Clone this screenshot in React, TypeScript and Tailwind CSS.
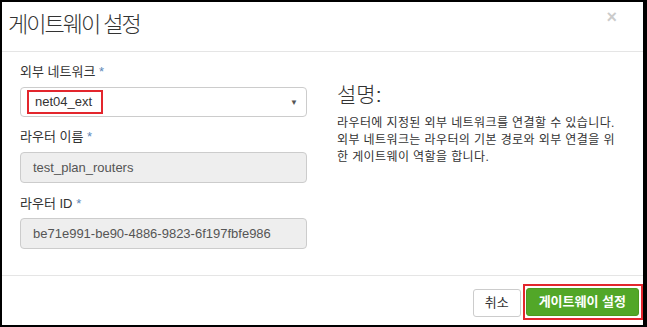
export default function App() {
  const font = { fontFamily: '"Liberation Sans", "Noto Sans CJK KR", sans-serif' };
  return (
    <div className="w-[647px] h-[327px] bg-black pt-[2px] pl-[2px] pr-[4px] pb-[2px]" style={font}>
      <div className="flex h-full flex-col bg-white text-[#333]">
        {/* header */}
        <div className="relative h-[50px] shrink-0 border-b border-[#e5e5e5] pl-[6px] pt-[6px]">
          <h3 className="text-[22px] font-light leading-[34px] tracking-[-2px]">게이트웨이 설정</h3>
          <span className="absolute right-[26px] top-[6px] text-[18px] font-bold leading-[18px] text-black opacity-20">×</span>
        </div>

        {/* body */}
        <div className="flex flex-1 px-[18px] pt-[11px]">
          <div className="w-[287px] shrink-0">
            <Label text="외부 네트워크" />
            <div className="relative mt-[6px] flex h-[30px] items-center rounded-[4px] border border-[#ccc] bg-white pl-[6px] text-[13px]">
              <span className="w-[76px] border-2 border-[#e3262d] px-[6px] py-[1px] leading-[18px]">net04_ext</span>
              <span className="absolute right-[8px] top-[9px] text-[8px] text-[#555]">▼</span>
            </div>
            <Label text="라우터 이름" className="mt-[11px]" />
            <div className="mt-[6px] flex h-[31px] items-center rounded-[4px] border border-[#ccc] bg-[#eee] px-[12px] text-[13px] text-[#555]">
              test_plan_routers
            </div>
            <Label text="라우터 ID" className="mt-[12px]" />
            <div className="mt-[5px] flex h-[31px] items-center rounded-[4px] border border-[#ccc] bg-[#eee] px-[12px] text-[13px] text-[#555]">
              be71e991-be90-4886-9823-6f197fbfe986
            </div>
          </div>
          <div className="ml-[30px] pt-[19px]">
            <h3 className="text-[21px] font-light leading-[26px]">설명:</h3>
            <p className="mt-[7px] whitespace-nowrap text-[12px] leading-[17px] tracking-[0.4px]">
              라우터에 지정된 외부 네트워크를 연결할 수 있습니다.
              <br />
              외부 네트워크는 라우터의 기본 경로와 외부 연결을 위
              <br />한 게이트웨이 역할을 합니다.
            </p>
          </div>
        </div>

        {/* footer */}
        <div className="flex h-[50px] shrink-0 items-start justify-end border-t border-[#e5e5e5] pt-[8px]">
          <button className="mt-[5px] h-[28px] rounded-[3px] border border-[#ccc] bg-white px-[11px] text-[13px] text-[#333]">
            취소
          </button>
          <div className="ml-[2px] border-2 border-[#e3262d] py-[2px] pl-[1px] pr-[2px]">
            <button className="h-[28px] rounded-[3px] border border-[#4c9a1f] bg-[#52a728] px-[12px] text-[13px] font-bold text-white">
              게이트웨이 설정
            </button>
          </div>
        </div>
      </div>
    </div>
  );
}

function Label({ text, className = '' }: { text: string; className?: string }) {
  return (
    <div className={`text-[13px] leading-[18px] text-[#333] ${className}`}>
      {text} <span className="text-[#5b87b8]">*</span>
    </div>
  );
}
